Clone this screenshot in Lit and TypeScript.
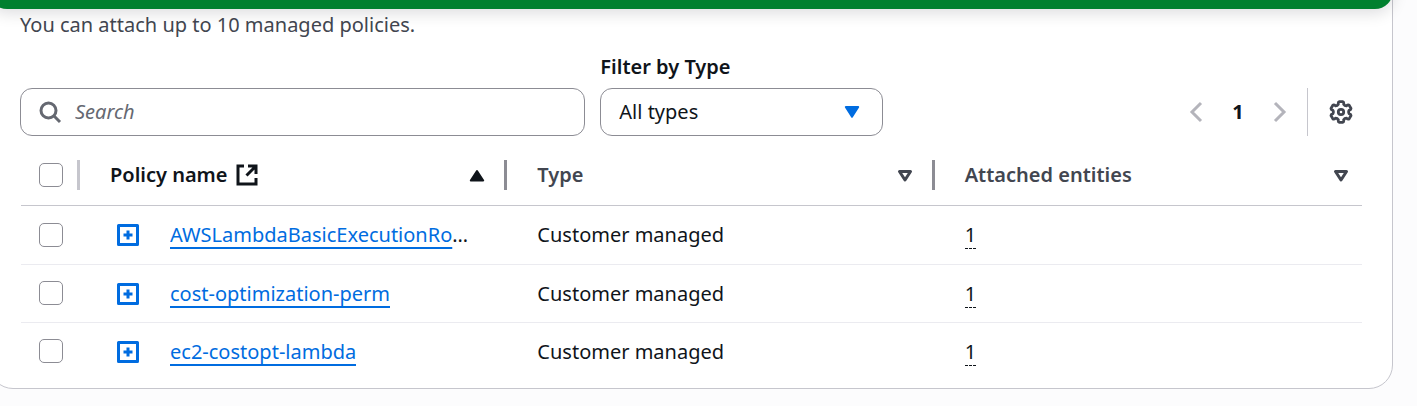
import { LitElement, html, css, svg } from "lit";
import { customElement, state } from "lit/decorators.js";

interface Policy {
  name: string;
  shortened?: boolean;
  type: string;
  entities: number;
}

const POLICIES: Policy[] = [
  { name: "AWSLambdaBasicExecutionRo", shortened: true, type: "Customer managed", entities: 1 },
  { name: "cost-optimization-perm", type: "Customer managed", entities: 1 },
  { name: "ec2-costopt-lambda", type: "Customer managed", entities: 1 },
];

// Outline of a six-toothed cog centred in a 24-unit box.
const polar = (radius: number, degrees: number) => {
  const a = (degrees * Math.PI) / 180;
  return `${(12 + radius * Math.sin(a)).toFixed(2)} ${(12 - radius * Math.cos(a)).toFixed(2)}`;
};
const GEAR =
  [0, 60, 120, 180, 240, 300]
    .map(
      (d, i) =>
        `${i ? "L" : "M"}${polar(8.2, d - 19)}Q${polar(10.6, d - 17)} ${polar(10.6, d - 9)}` +
        `L${polar(10.6, d + 9)}Q${polar(10.6, d + 17)} ${polar(8.2, d + 19)}Q${polar(7.2, d + 30)} ${polar(8.2, d + 41)}`,
    )
    .join("") + "z";

@customElement("app-root")
export class AppRoot extends LitElement {
  @state() private policies = POLICIES;

  static styles = css`
    :host {
      display: block;
      position: relative;
      overflow: hidden;
      min-height: 100vh;
      box-sizing: border-box;
      background: #fcfcfd;
      color: #0f141a;
      font-family: "Noto Sans", "Open Sans", sans-serif;
      font-size: 20px;
      line-height: 30px;
    }
    * {
      box-sizing: border-box;
    }
    .flash {
      position: absolute;
      top: -40px;
      left: -11px;
      right: 24px;
      height: 49px;
      border-radius: 18px;
      background: #00802f;
      box-shadow: 0 4px 16px rgba(0, 7, 22, 0.14);
    }
    .panel {
      margin: -24px 24px 0 -11px;
      padding: 33px 30px 8px;
      border: 1px solid #c6c6cd;
      border-radius: 24px;
      background: #fff;
    }
    .description {
      margin: 0 0 12px;
      color: #424650;
    }
    .toolbar {
      display: flex;
      align-items: flex-end;
      justify-content: space-between;
      gap: 16px;
      padding-right: 1px;
    }
    .filters {
      flex: 0 1 863px;
      display: grid;
      grid-template-columns: 2fr 1fr;
      align-items: end;
      gap: 15px;
    }
    .label {
      display: block;
      margin-bottom: 6px;
      font-weight: 600;
    }
    .control {
      display: grid;
      align-items: center;
    }
    .control > * {
      grid-area: 1 / 1;
    }
    .control svg {
      pointer-events: none;
    }
    .search-icon {
      margin-left: 18px;
      color: #656871;
    }
    .caret {
      justify-self: end;
      margin-right: 19px;
      color: #006ce0;
    }
    .field {
      width: 100%;
      height: 48px;
      margin: 0;
      border: 1px solid #8c8c94;
      border-radius: 12px;
      background: #fff;
      color: inherit;
      font: inherit;
      appearance: none;
    }
    .search {
      padding: 0 16px 2px 54px;
    }
    .search::placeholder {
      color: #656871;
      font-style: italic;
      opacity: 1;
    }
    .select {
      padding: 0 48px 0 18px;
    }
    svg {
      display: block;
      flex: none;
    }
    .pager {
      display: flex;
      align-items: center;
      height: 48px;
    }
    button {
      display: inline-flex;
      align-items: center;
      justify-content: center;
      padding: 0;
      border: 0;
      background: none;
      color: inherit;
      font: inherit;
    }
    .page-button {
      width: 42px;
      height: 30px;
    }
    .step {
      color: #b4b4bb;
    }
    .current {
      font-weight: 700;
    }
    .preferences {
      width: 54px;
      height: 48px;
      margin-left: 6px;
      padding-left: 12px;
      border-left: 1px solid #c6c6cd;
      color: #424650;
    }
    .listing {
      margin-top: 10px;
      padding-left: 1px;
    }
    table {
      width: 100%;
      table-layout: fixed;
      border-collapse: collapse;
    }
    th,
    td {
      padding: 0;
      text-align: left;
      font-weight: 400;
    }
    th {
      height: 59px;
      border-bottom: 1px solid #c6c6cd;
    }
    td {
      height: 58px;
    }
    tbody tr:first-child td {
      height: 59px;
    }
    tr + tr td {
      border-top: 1px solid #ebebf0;
    }
    .pick {
      width: 59px;
    }
    .head {
      display: flex;
      align-items: center;
      color: #424650;
    }
    .head.sorted {
      color: #0f141a;
    }
    .title {
      display: flex;
      align-items: center;
      gap: 8px;
      flex: 1;
      padding-left: 30px;
      font-weight: 600;
    }
    .divider {
      width: 3px;
      height: 30px;
      margin-left: 15px;
      background: #8c8c94;
    }
    .divider.faint {
      margin-left: 14px;
      background: #c6c6cd;
    }
    .sort.last {
      margin-right: 9px;
    }
    .check {
      display: block;
      width: 24px;
      height: 24px;
      margin: 0 0 0 18px;
      border: 1px solid #8c8c94;
      border-radius: 5px;
      background: #fff;
      appearance: none;
    }
    .name {
      display: flex;
      align-items: center;
      gap: 31px;
      padding: 1px 24px 0 37px;
    }
    .expand {
      color: #006ce0;
    }
    .clip {
      overflow: hidden;
      text-overflow: ellipsis;
      white-space: nowrap;
    }
    .link {
      color: #006ce0;
      text-decoration: underline;
      text-decoration-thickness: 2px;
      text-underline-offset: 5px;
    }
    .text {
      padding: 1px 0 0 30px;
    }
    .count {
      border-bottom: 1px dashed #0f141a;
    }
  `;

  private sortIcon(kind: "asc" | "none", last = false) {
    return html`<button class="sort ${last ? "last" : ""}" aria-label="Sort">
      <svg width="24" height="24" viewBox="0 0 24 24" stroke="currentColor" stroke-linejoin="round">
        ${kind === "asc"
          ? svg`<path d="M12 8l6.200 9.500h-12.400z" fill="currentColor" stroke-width="2" />`
          : svg`<path d="M6.500 8.500h11l-5.500 8.500z" fill="none" stroke-width="3" />`}
      </svg>
    </button>`;
  }

  private row(p: Policy) {
    return html`<tr>
      <td><input class="check" type="checkbox" aria-label="Select ${p.name}" /></td>
      <td>
        <div class="name">
          <button class="expand" aria-label="Expand ${p.name}">
            <svg width="22" height="22" viewBox="0 0 22 22" fill="none" stroke="currentColor" stroke-width="3">
              <rect x="1.500" y="1.500" width="19" height="19" stroke-linejoin="round" />
              <path d="M11 6.500v9M6.500 11h9" />
            </svg>
          </button>
          <div class="clip"><a class="link" href="#">${p.name}</a>${p.shortened ? "…" : ""}</div>
        </div>
      </td>
      <td class="text">${p.type}</td>
      <td class="text"><span class="count">${p.entities}</span></td>
    </tr>`;
  }

  render() {
    return html`
      <main class="panel">
        <p class="description">You can attach up to 10 managed policies.</p>
        <div class="toolbar">
          <div class="filters">
            <div class="control">
              <input class="field search" type="text" placeholder="Search" aria-label="Search" />
              <svg class="search-icon" width="24" height="24" viewBox="0 0 24 24" fill="none" stroke="currentColor" stroke-width="3">
                <circle cx="10.500" cy="10.500" r="7.500" />
                <path d="M15.800 15.800l6.200 6.200" />
              </svg>
            </div>
            <div>
              <label class="label" for="type-filter">Filter by Type</label>
              <div class="control">
                <select class="field select" id="type-filter">
                  <option>All types</option>
                </select>
                <svg class="caret" width="24" height="24" viewBox="0 0 24 24" fill="currentColor" stroke="currentColor" stroke-width="2" stroke-linejoin="round">
                  <path d="M5.800 7h12.400l-6.200 9.800z" />
                </svg>
              </div>
            </div>
          </div>
          <nav class="pager" aria-label="Pagination">
            <button class="page-button step" aria-label="Previous page" disabled>
              <svg width="24" height="24" viewBox="0 0 24 24" fill="none" stroke="currentColor" stroke-width="3">
                <path d="M17 3l-9 9 9 9" />
              </svg>
            </button>
            <button class="page-button current" aria-current="page">1</button>
            <button class="page-button step" aria-label="Next page" disabled>
              <svg width="24" height="24" viewBox="0 0 24 24" fill="none" stroke="currentColor" stroke-width="3">
                <path d="M7 3l9 9-9 9" />
              </svg>
            </button>
            <button class="preferences" aria-label="Preferences">
              <svg width="24" height="24" viewBox="0 0 24 24" fill="none" stroke="currentColor" stroke-width="2.800" stroke-linejoin="round">
                <path d=${GEAR} />
                <circle cx="12" cy="12" r="2.700" />
              </svg>
            </button>
          </nav>
        </div>
        <div class="listing">
          <table>
            <thead>
              <tr>
                <th class="pick">
                  <div class="head">
                    <input class="check" type="checkbox" aria-label="Select all" />
                    <span class="divider faint"></span>
                  </div>
                </th>
                <th>
                  <div class="head sorted">
                    <span class="title">
                      Policy name
                      <svg width="22" height="22" viewBox="0 0 22 22" fill="none" stroke="currentColor" stroke-width="3">
                        <path d="M8 2H2v18h18v-6M12 2h8v8M20 2l-9.500 9.500" />
                      </svg>
                    </span>
                    ${this.sortIcon("asc")}
                    <span class="divider"></span>
                  </div>
                </th>
                <th>
                  <div class="head">
                    <span class="title">Type</span>
                    ${this.sortIcon("none")}
                    <span class="divider"></span>
                  </div>
                </th>
                <th>
                  <div class="head">
                    <span class="title">Attached entities</span>
                    ${this.sortIcon("none", true)}
                  </div>
                </th>
              </tr>
            </thead>
            <tbody>
              ${this.policies.map((p) => this.row(p))}
            </tbody>
          </table>
        </div>
      </main>
      <div class="flash" role="status"></div>
    `;
  }
}
